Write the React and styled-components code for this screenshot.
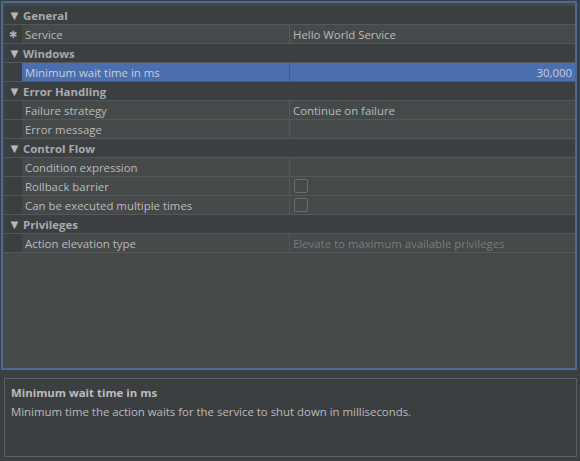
import React from "react";
import styled, { createGlobalStyle } from "styled-components";

const Global = createGlobalStyle`
  html, body { margin: 0; padding: 0; background: #3c3f41; }
  body { font-family: "Open Sans", "Noto Sans", sans-serif; font-size: 11.4px; color: #bbbbbb; }
  * { box-sizing: border-box; }
`;

const Page = styled.div`
  width: 580px;
  height: 461px;
  display: flex;
  flex-direction: column;
  padding: 1px 3px 4px 1px;
  gap: 8px;
`;

const GridPanel = styled.div`
  height: 369px;
  flex-shrink: 0;
  border: 2px solid #4a6a9a;
  background: #45494a;
  padding: 3px 0 0 1px;
  display: flex;
  flex-direction: column;
`;

const Row = styled.div`
  height: 19px;
  flex-shrink: 0;
  display: flex;
  border-bottom: 1px solid #555759;
  background: ${(p) => (p.$selected ? "#4b6eaf" : "#45494a")};
`;

const CategoryRow = styled.div`
  height: 19px;
  flex-shrink: 0;
  display: flex;
  align-items: center;
  background: #3c3f41;
  border-bottom: 1px solid #555759;
  font-weight: 700;
  color: #a9aaab;
  gap: 3px;
  padding-left: 4px;
`;

const Triangle = styled.span`
  font-size: 13px;
  line-height: 12px;
  color: #b8b8b8;
  width: 12px;
  text-align: center;
`;

const Gutter = styled.div`
  width: 18px;
  background: #3c3f41;
  display: flex;
  align-items: center;
  justify-content: center;
  font-size: 10px;
  color: #aaaaaa;
`;

const NameCell = styled.div`
  width: 268px;
  padding-left: 3px;
  display: flex;
  align-items: center;
  border-right: 1px solid #555759;
  color: ${(p) => (p.$selected ? "#c8d0dc" : "#bbbbbb")};
  white-space: nowrap;
`;

const ValueCell = styled.div`
  flex: 1;
  padding: 0 3px 0 3px;
  display: flex;
  align-items: center;
  justify-content: ${(p) => (p.$right ? "flex-end" : "flex-start")};
  color: ${(p) => (p.$disabled ? "#7a7c7e" : p.$selected ? "#c8d0dc" : "#bbbbbb")};
  white-space: nowrap;
`;

const Checkbox = styled.span`
  width: 14px;
  height: 14px;
  margin-left: 1px;
  border: 1px solid #6a6c6e;
  border-radius: 2px;
  background: #45494a;
`;

const DescPanel = styled.div`
  flex: 1;
  margin-left: 3px;
  border: 1px solid #5e6060;
  background: #3c3f41;
  padding: 5px 6px;
  display: flex;
  flex-direction: column;
  gap: 1px;
`;

const DescTitle = styled.div`
  font-weight: 700;
  color: #bbbbbb;
  line-height: 18px;
`;

const DescText = styled.div`
  color: #bbbbbb;
  line-height: 18px;
`;

const data = [
  { cat: "General", rows: [{ name: "Service", value: "Hello World Service", star: true }] },
  { cat: "Windows", rows: [{ name: "Minimum wait time in ms", value: "30,000", right: true, selected: true }] },
  {
    cat: "Error Handling",
    rows: [
      { name: "Failure strategy", value: "Continue on failure" },
      { name: "Error message", value: "" },
    ],
  },
  {
    cat: "Control Flow",
    rows: [
      { name: "Condition expression", value: "" },
      { name: "Rollback barrier", check: true },
      { name: "Can be executed multiple times", check: true },
    ],
  },
  {
    cat: "Privileges",
    rows: [{ name: "Action elevation type", value: "Elevate to maximum available privileges", disabled: true }],
  },
];

export default function App() {
  return (
    <>
      <Global />
      <Page>
        <GridPanel>
          {data.map((g) => (
            <React.Fragment key={g.cat}>
              <CategoryRow>
                <Triangle>▼</Triangle>
                {g.cat}
              </CategoryRow>
              {g.rows.map((r) => (
                <Row key={r.name} $selected={r.selected}>
                  <Gutter>{r.star ? "✱" : ""}</Gutter>
                  <NameCell $selected={r.selected}>{r.name}</NameCell>
                  <ValueCell $right={r.right} $disabled={r.disabled} $selected={r.selected}>
                    {r.check ? <Checkbox /> : r.value}
                  </ValueCell>
                </Row>
              ))}
            </React.Fragment>
          ))}
        </GridPanel>
        <DescPanel>
          <DescTitle>Minimum wait time in ms</DescTitle>
          <DescText>Minimum time the action waits for the service to shut down in milliseconds.</DescText>
        </DescPanel>
      </Page>
    </>
  );
}
